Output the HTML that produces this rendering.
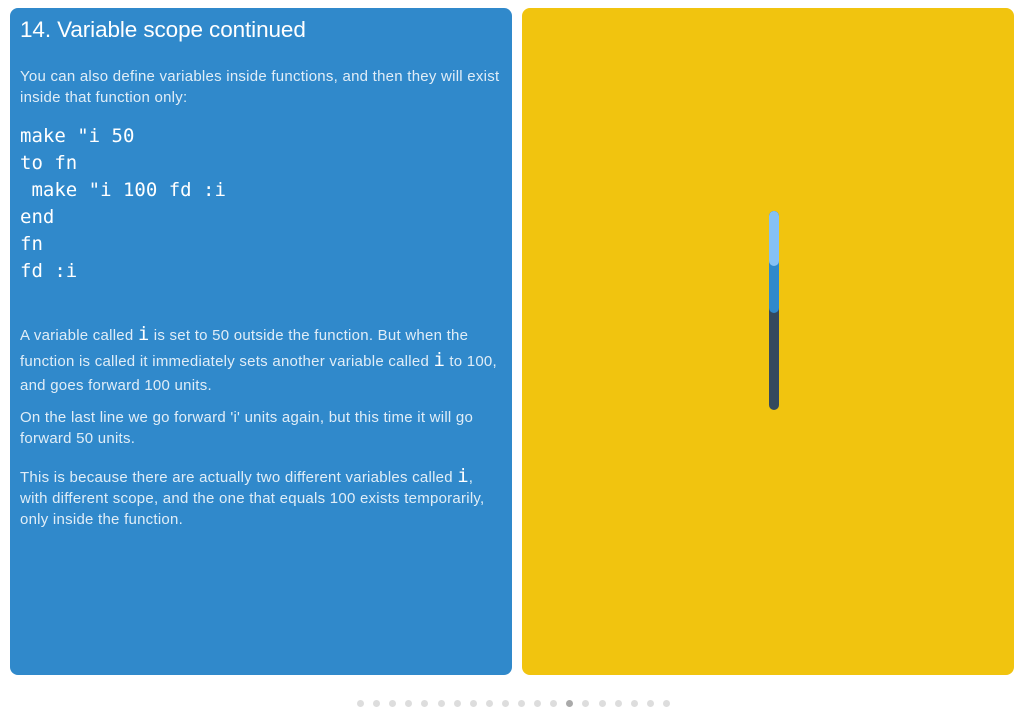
<!DOCTYPE html>
<html><head><style>
body{margin:0;background:#fff;width:1024px;height:722px;position:relative;overflow:hidden;font-family:"Liberation Sans",sans-serif}
.l{position:absolute;left:10px;top:8px;width:502px;height:667px;background:#3089cb;border-radius:8px;color:#fff}
.r{position:absolute;left:522px;top:8px;width:492px;height:667px;background:#f1c40f;border-radius:8px}
h1{position:absolute;left:10px;top:9px;margin:0;font-weight:normal;font-size:22.5px;letter-spacing:-0.1px}
p{position:absolute;left:10px;margin:0;white-space:nowrap;font-size:15px;letter-spacing:0.25px;line-height:21px;color:rgba(255,255,255,.85)}
pre{position:absolute;left:10px;top:115px;margin:0;font-family:"DejaVu Sans Mono","Liberation Mono",monospace;font-size:19px;line-height:27px;color:#fff}
code{font-family:"DejaVu Sans Mono",monospace;font-size:19px;letter-spacing:0;color:#fff}
.d{position:absolute;top:700px;width:7px;height:7px;border-radius:50%;background:#ddd}
</style></head><body>
<div class="l">
<h1>14. Variable scope continued</h1>
<p style="top:58px">You can also define variables inside functions, and then they will exist<br>inside that function only:</p>
<pre>make "i 50
to fn
 make "i 100 fd :i
end
fn
fd :i</pre>
<p style="top:314px;line-height:24px">A variable called <code>i</code> is set to 50 outside the function. But when the<br>function is called it immediately sets another variable called <code>i</code> to 100,<br>and goes forward 100 units.</p>
<p style="top:399px">On the last line we go forward 'i' units again, but this time it will go<br>forward 50 units.</p>
<p style="top:458px;line-height:21px">This is because there are actually two different variables called <code>i</code>,<br>with different scope, and the one that equals 100 exists temporarily,<br>only inside the function.</p>
</div>
<div class="r"></div>
<svg style="position:absolute;left:0;top:0" width="1024" height="722">
<line x1="774" y1="216" x2="774" y2="405" stroke="#34495e" stroke-width="10" stroke-linecap="round"/>
<line x1="774" y1="216" x2="774" y2="308" stroke="#3089cb" stroke-width="10" stroke-linecap="round"/>
<line x1="774" y1="216" x2="774" y2="261" stroke="#85c1f5" stroke-width="10" stroke-linecap="round"/>
</svg>
<script>
for(let i=0;i<20;i++){let d=document.createElement('div');d.className='d';d.style.left=(357+i*16.1)+'px';if(i==13)d.style.background='#aaa';document.body.appendChild(d);}
</script>
</body></html>
